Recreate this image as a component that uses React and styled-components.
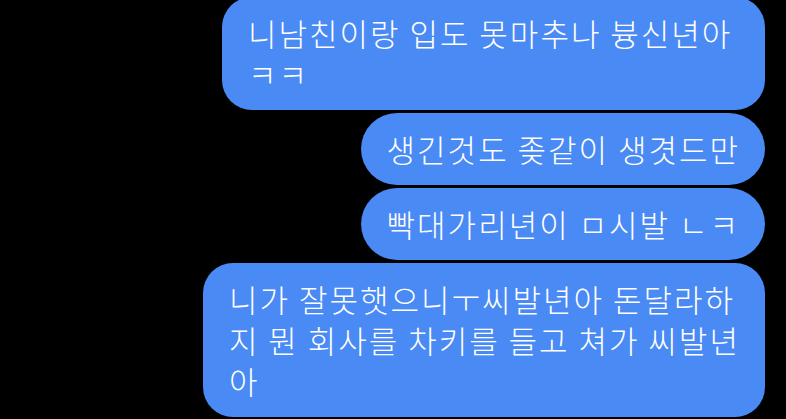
import React from 'react'
import styled, { createGlobalStyle } from 'styled-components'

const Global = createGlobalStyle`
  html, body {
    margin: 0;
    padding: 0;
    background: #000;
    overflow: hidden;
  }
`

const messages = [
  { lines: ['니남친이랑 입도 못마추나 븅신년아', 'ㅋㅋ'], width: 543 },
  { lines: ['생긴것도 좆같이 생겻드만'] },
  { lines: ['빡대가리년이 ㅁ시발 ㄴㅋ'] },
  { lines: ['니가 잘못햇으니ㅜ씨발년아 돈달라하', '지 뭔 회사를 차키를 들고 쳐가 씨발년', '아'], width: 562 },
]

export default function App() {
  return (
    <>
      <Global />
      <Screen>
        <Thread>
          {messages.map((m, i) => (
            <Bubble key={i} $multi={m.lines.length > 1} style={m.width ? { width: m.width } : undefined}>
              {m.lines.map((l, j) => (
                <Line key={j}>{l}</Line>
              ))}
            </Bubble>
          ))}
        </Thread>
      </Screen>
    </>
  )
}

const Screen = styled.div`
  width: 786px;
  height: 419px;
  background: #000;
  overflow: hidden;
`

const Thread = styled.div`
  display: flex;
  flex-direction: column;
  align-items: flex-end;
  gap: 3px;
  margin-top: -3px;
  padding-right: 21px;
`

const Bubble = styled.div`
  box-sizing: border-box;
  width: fit-content;
  background: #4a8af4;
  color: #fff;
  font-family: 'Noto Sans CJK KR', 'Noto Sans', sans-serif;
  font-weight: 300;
  font-size: 31px;
  letter-spacing: 2px;
  line-height: 41px;
  padding: 15px 25px 16px 26px;
  border-radius: ${p => (p.$multi ? '30px' : '36px')};
`

const Line = styled.div`
  white-space: nowrap;
`
